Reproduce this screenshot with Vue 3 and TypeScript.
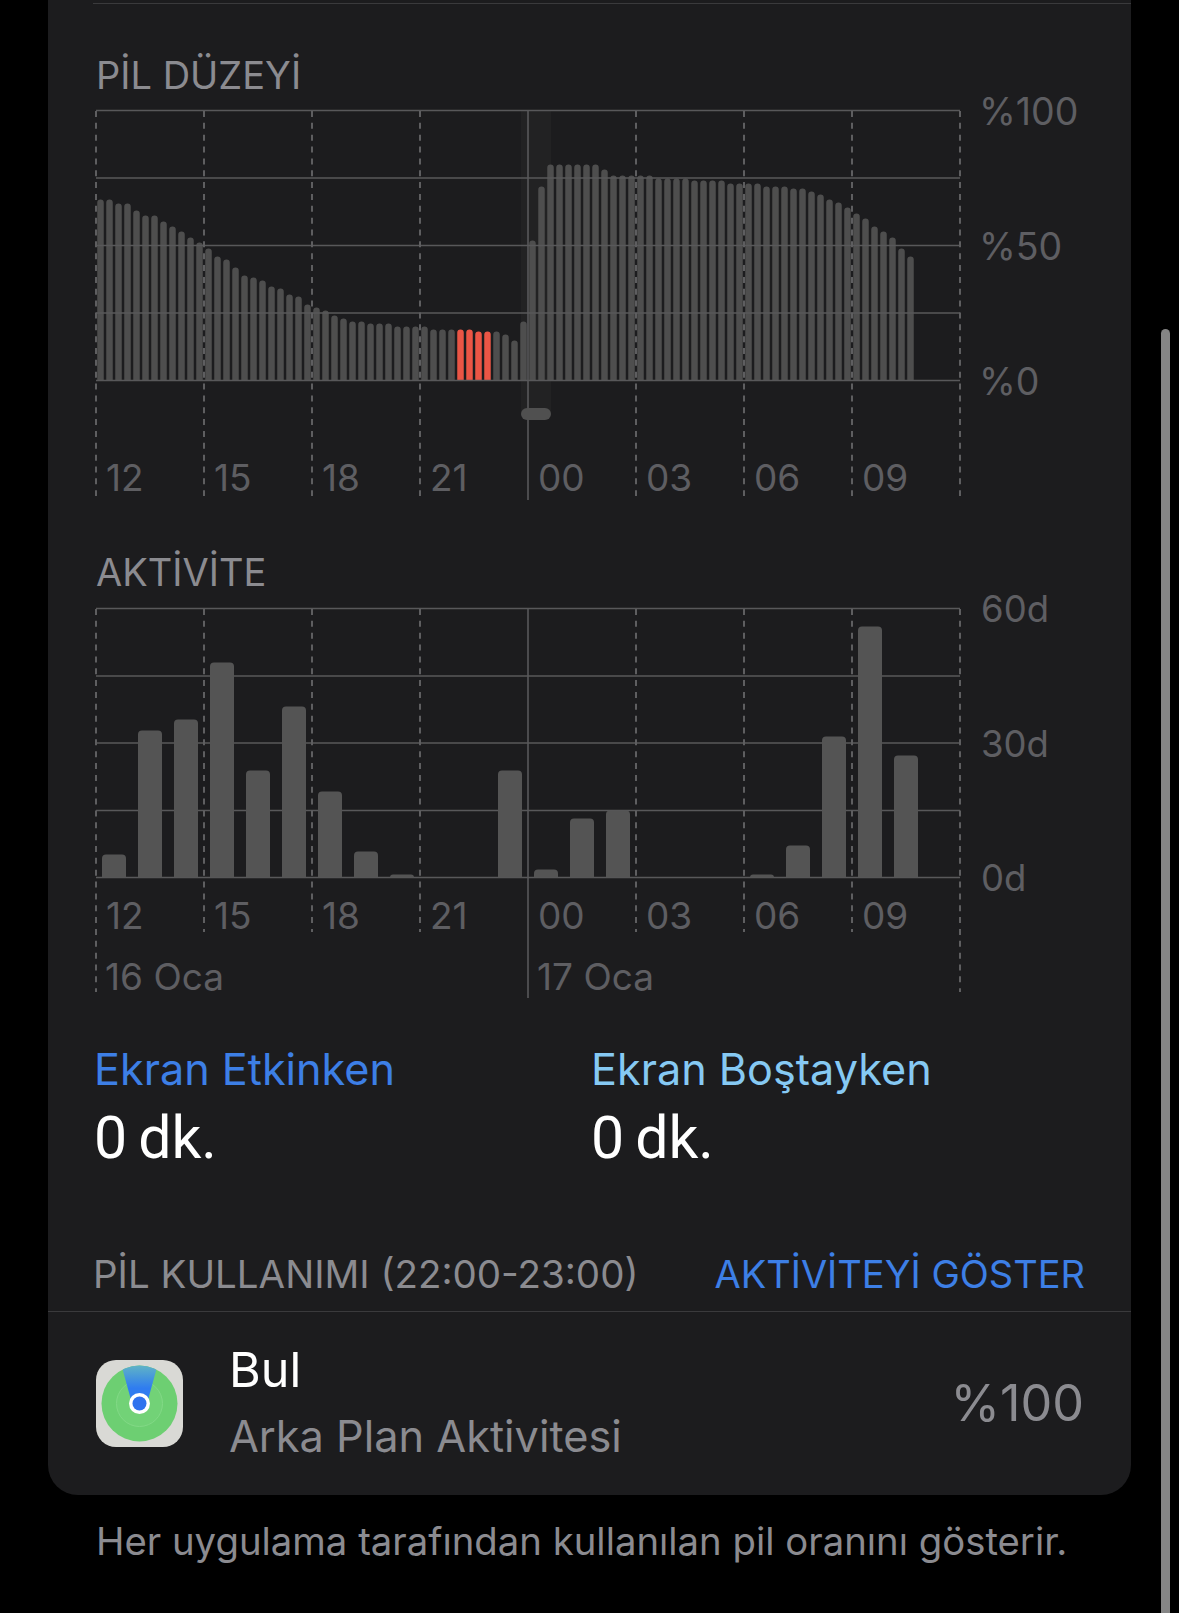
<template>
  <div class="page">
    <div class="card">
      <div class="top-rule"></div>

      <section class="chart-block battery">
        <h3 class="section-title">PİL DÜZEYİ</h3>
        <div class="chart-row">
          <div class="plot">
            <svg class="plot-svg" width="866" height="392">
              <rect x="425" y="0" width="30" height="303" fill="#222223" />
              <path v-for="b in batteryBars" :key="b.d" :d="b.d" :fill="b.fill" />
              <line v-for="y in batteryLines" :key="y" x1="0" x2="864" :y1="y" :y2="y" class="grid" />
              <line
                v-for="x in dashXs"
                :key="x"
                :x1="x"
                :x2="x"
                y1="1"
                y2="386"
                class="dash"
              />
              <line x1="432" x2="432" y1="0" y2="390" class="grid" />
              <rect x="425" y="298" width="30" height="12" rx="6" fill="#505050" />
            </svg>
          </div>
          <div class="y-axis">
            <span>%100</span>
            <span>%50</span>
            <span>%0</span>
          </div>
        </div>
        <div class="hours hours-battery">
          <span v-for="h in hours" :key="h">{{ h }}</span>
        </div>
      </section>

      <section class="chart-block activity">
        <h3 class="section-title">AKTİVİTE</h3>
        <div class="chart-row">
          <div class="plot plot-activity">
            <svg class="plot-svg" width="866" height="392">
              <line v-for="y in activityLines" :key="y" x1="0" x2="864" :y1="y" :y2="y" class="grid" />
              <line
                v-for="x in dashXs"
                :key="x"
                :x1="x"
                :x2="x"
                y1="1"
                :y2="x === 0 || x === 864 ? 384 : 324"
                class="dash"
              />
              <line x1="432" x2="432" y1="0" y2="390" class="grid" />
              <path v-for="b in activityBars" :key="b" :d="b" fill="#545454" />
            </svg>
          </div>
          <div class="y-axis y-axis-activity">
            <span>60d</span>
            <span>30d</span>
            <span>0d</span>
          </div>
        </div>
        <div class="hours hours-activity">
          <span v-for="h in hours" :key="h">{{ h }}</span>
        </div>
        <div class="hours dates">
          <span class="date-cell">16 Oca</span>
          <span class="date-cell">17 Oca</span>
        </div>
      </section>

      <div class="stats">
        <div class="stat">
          <div class="stat-label active">Ekran Etkinken</div>
          <div class="stat-value">0&#8202;<span class="unit">dk.</span></div>
        </div>
        <div class="stat">
          <div class="stat-label idle">Ekran Boştayken</div>
          <div class="stat-value">0&#8202;<span class="unit">dk.</span></div>
        </div>
      </div>

      <div class="usage-head">
        <span>PİL KULLANIMI (22:00-23:00)</span>
        <span class="usage-link">AKTİVİTEYİ GÖSTER</span>
      </div>

      <div class="app-row">
        <svg class="app-icon" viewBox="0 0 87 87" width="87" height="87">
          <defs>
            <linearGradient id="beam" x1="0" y1="1" x2="0" y2="0">
              <stop offset="0.35" stop-color="#2f7cf0" />
              <stop offset="0.9" stop-color="#62b6c4" />
            </linearGradient>
            <clipPath id="disc"><circle cx="43.5" cy="43.5" r="38" /></clipPath>
          </defs>
          <rect width="87" height="87" rx="20" fill="#d9d9d5" />
          <circle cx="43.5" cy="43.5" r="38" fill="#6dcf72" />
          <circle cx="43.5" cy="43.5" r="23" fill="#72d277" stroke="#82d986" stroke-width="1" />
          <path d="M36 43.5 L24 0 H63 L51 43.5 Z" fill="url(#beam)" clip-path="url(#disc)" />
          <circle cx="43.5" cy="43.5" r="10.5" fill="#fff" />
          <circle cx="43.5" cy="43.5" r="7" fill="#2f72ee" />
        </svg>
        <div class="app-text">
          <div class="app-name">Bul</div>
          <div class="app-sub">Arka Plan Aktivitesi</div>
        </div>
        <div class="app-pct">%100</div>
      </div>
    </div>

    <p class="footnote">Her uygulama tarafından kullanılan pil oranını gösterir.</p>

    <div class="scrollbar"></div>
  </div>
</template>

<script setup lang="ts">
const hours = ['12', '15', '18', '21', '00', '03', '06', '09']
const dashXs = [0, 108, 216, 324, 540, 648, 756, 864]
const batteryLines = [0.5, 68, 135.5, 203, 270.5]
const activityLines = [0.5, 68, 135, 202.5, 269.5]

// bar tops measured in px above the baseline, one bar per 15 minutes
const batteryHeights = [
  181, 181, 177, 177, 170, 165, 165, 159, 154, 149, 143, 138,
  132, 124, 121, 113, 105, 103, 100, 94, 92, 86, 84, 76,
  73, 70, 65, 62, 59, 59, 57, 57, 57, 54, 54, 54,
  54, 51, 51, 51, 51, 51, 49, 49, 49, 46, 40, 59,
  140, 194, 216, 216, 216, 216, 216, 216, 211, 205, 205, 205,
  205, 205, 202, 202, 202, 202, 200, 200, 200, 200, 197, 197,
  197, 197, 194, 194, 194, 192, 192, 189, 186, 181, 178, 173,
  167, 162, 154, 149, 143, 132, 124,
]
const redBars = [40, 41, 42, 43]

const activityHeights: Record<number, number> = {
  0: 23, 1: 147, 2: 158, 3: 215, 4: 107, 5: 171, 6: 86, 7: 26, 8: 3,
  11: 107, 12: 8, 13: 59, 14: 67, 18: 3, 19: 32, 20: 141, 21: 251, 22: 122,
}

const topRounded = (x: number, w: number, h: number, base: number, r: number) => {
  const top = base - h
  const rr = Math.min(r, h)
  return `M${x} ${base}V${top + rr}A${rr} ${rr} 0 0 1 ${x + rr} ${top}H${x + w - rr}A${rr} ${rr} 0 0 1 ${x + w} ${top + rr}V${base}Z`
}

const batteryBars = batteryHeights.map((h, i) => ({
  d: topRounded(1.25 + 9 * i, 6.5, h, 270.5, 3.25),
  fill: redBars.includes(i) ? '#ea5545' : '#4e4e4e',
}))

const activityBars = Object.entries(activityHeights).map(([i, h]) =>
  topRounded(6 + 36 * Number(i), 24, h, 269.5, 4),
)
</script>

<style scoped>
.page {
  position: relative;
  width: 1179px;
  height: 1613px;
  overflow: hidden;
  background: #000;
  font-family: Inter, "Liberation Sans", sans-serif;
}

.card {
  margin-left: 48px;
  width: 1083px;
  padding-top: 3px;
  background: #1c1c1e;
  border-radius: 0 0 30px 30px;
}

.top-rule {
  height: 1px;
  margin-left: 45px;
  background: #3a3a3c;
}

.chart-block {
  padding-left: 48px;
}

.section-title {
  margin: 0;
  font-size: 38px;
  font-weight: 400;
  line-height: 46px;
  color: #8b8b90;
}

.battery .section-title {
  margin-top: 48px;
  margin-bottom: 12px;
}

.activity .section-title {
  margin-top: 51px;
  margin-bottom: 13px;
}

.chart-row {
  display: flex;
}

.plot {
  position: relative;
  flex: none;
  width: 864px;
  height: 271px;
}

.plot-activity {
  height: 270px;
}

.plot-svg {
  position: absolute;
  top: 0;
  left: 0;
  overflow: visible;
}

.grid {
  stroke: #58585a;
  stroke-width: 1.6;
}

.dash {
  stroke: #5e5e60;
  stroke-width: 2;
  stroke-dasharray: 6 5.85;
}

.y-axis {
  display: flex;
  flex-direction: column;
  justify-content: space-between;
  height: 310px;
  margin: -18px 0 -21px 19px;
  font-size: 37.5px;
  line-height: 40px;
  color: #5e5e62;
}

.y-axis-activity {
  height: 309px;
  margin-top: -19px;
  margin-bottom: -20px;
  margin-left: 21px;
  font-size: 36.5px;
}

.hours {
  position: relative;
  display: grid;
  grid-template-columns: repeat(8, 108px);
  font-size: 37px;
  line-height: 40px;
  color: #5e5e62;
}

.hours span {
  padding-left: 10px;
}

.hours-battery {
  margin-top: 77px;
}

.hours-activity {
  margin-top: 18px;
}

.dates {
  margin-top: 21px;
}

.dates .date-cell {
  grid-column: span 4;
  padding-left: 9px;
  white-space: nowrap;
}

.stats {
  display: grid;
  grid-template-columns: 497px 1fr;
  margin-top: 46px;
  padding-left: 46px;
}

.stat-label {
  font-size: 43.2px;
  line-height: 52px;
}

.stat-label.active {
  color: #3d7fe6;
}

.stat-label.idle {
  color: #86c9f3;
}

.stat-value {
  margin-top: 8px;
  font-family: Roboto, Inter, sans-serif;
  font-size: 59px;
  line-height: 70px;
  color: #fff;
}

.unit {
  margin-left: 5px;
}

.usage-head {
  display: flex;
  justify-content: space-between;
  margin-top: 78px;
  padding: 0 46px 14px 45px;
  border-bottom: 1px solid #3a3a3c;
  font-size: 38.5px;
  line-height: 46px;
  color: #8b8b90;
}

.usage-link {
  font-size: 38px;
  color: #3d7fe6;
}

.app-row {
  display: flex;
  align-items: center;
  height: 183px;
  padding: 0 47px 0 48px;
}

.app-icon {
  flex: none;
}

.app-text {
  flex: 1;
  margin: 0 0 1px 46px;
}

.app-name {
  font-size: 48.5px;
  line-height: 56px;
  color: #fff;
}

.app-sub {
  margin-top: 10px;
  font-size: 43.3px;
  line-height: 56px;
  color: #8b8b90;
}

.app-pct {
  margin-bottom: 2px;
  font-size: 50.4px;
  line-height: 56px;
  color: #8b8b90;
}

.footnote {
  margin: 23px 0 0 96px;
  font-size: 38.3px;
  line-height: 46px;
  color: #8b8b90;
  white-space: nowrap;
}

.scrollbar {
  position: absolute;
  top: 329px;
  bottom: 0;
  left: 1161px;
  width: 9px;
  border-radius: 5px 5px 0 0;
  background: #858585;
}
</style>
